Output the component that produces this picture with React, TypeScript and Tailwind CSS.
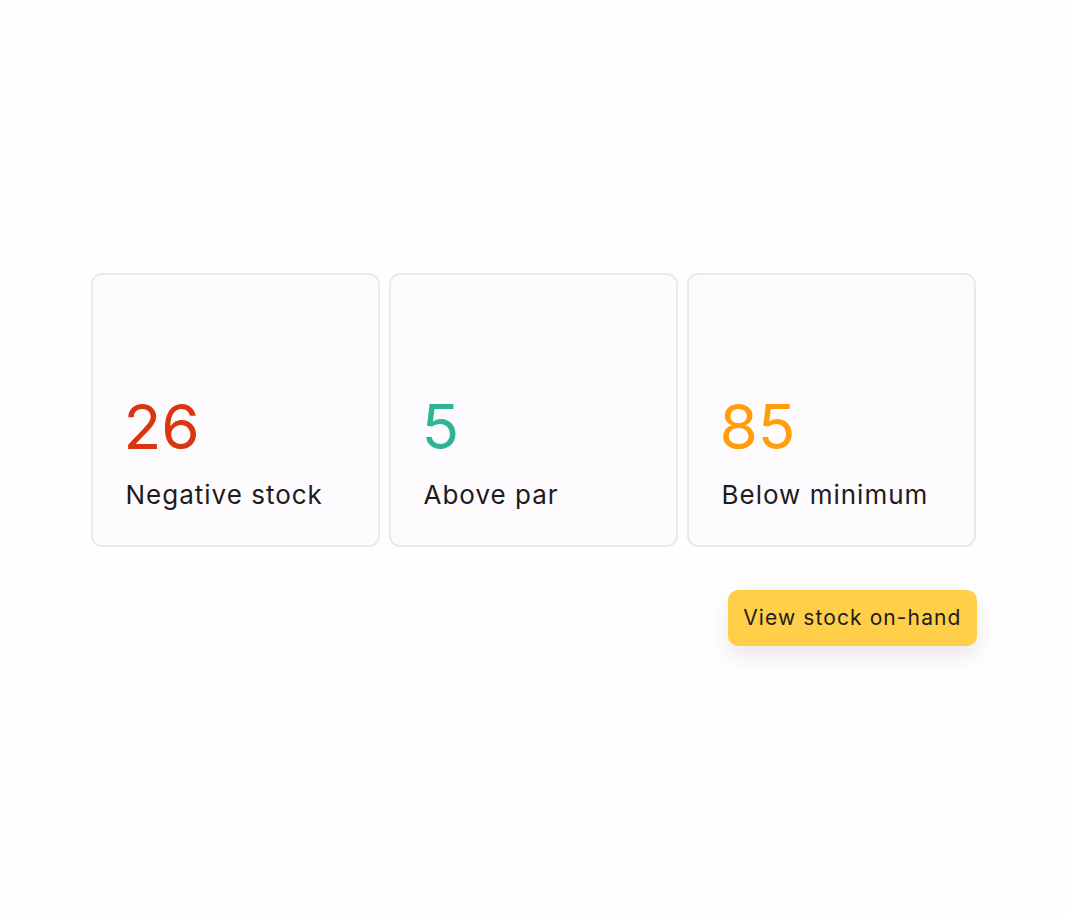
const stats = [
  { value: "26", label: "Negative stock", color: "text-[#d8360f]" },
  { value: "5", label: "Above par", color: "text-[#2fb596]" },
  { value: "85", label: "Below minimum", color: "text-[#ff9d0a]" },
];

export default function App() {
  return (
    <div
      className="min-h-screen bg-[#fffdfd] pt-[273px]"
      style={{ fontFamily: "Inter, 'Noto Sans', sans-serif" }}
    >
      <div className="mx-auto w-[885px]">
        <div className="grid grid-cols-3 gap-[9px]">
          {stats.map((s) => (
            <div
              key={s.label}
              className="flex h-[274px] flex-col justify-end rounded-[11px] border-2 border-[#ebe9ee] bg-[#fdfbfe] pb-[37px] pl-[33px]"
            >
              <div className={`-ml-[2px] text-[62px] leading-none ${s.color}`}>{s.value}</div>
              <div className="mt-[24px] text-[26px] leading-none tracking-[1px] text-[#1d1c21]">
                {s.label}
              </div>
            </div>
          ))}
        </div>
        <div className="mt-[43px] flex justify-end">
          <button className="-mr-px h-[56px] rounded-[10px] bg-[#ffcf4a] px-[15px] text-[21px] tracking-[1.1px] text-[#1d1c21] shadow-[0_10px_20px_rgba(60,50,90,0.10)]">
            View stock on-hand
          </button>
        </div>
      </div>
    </div>
  );
}
